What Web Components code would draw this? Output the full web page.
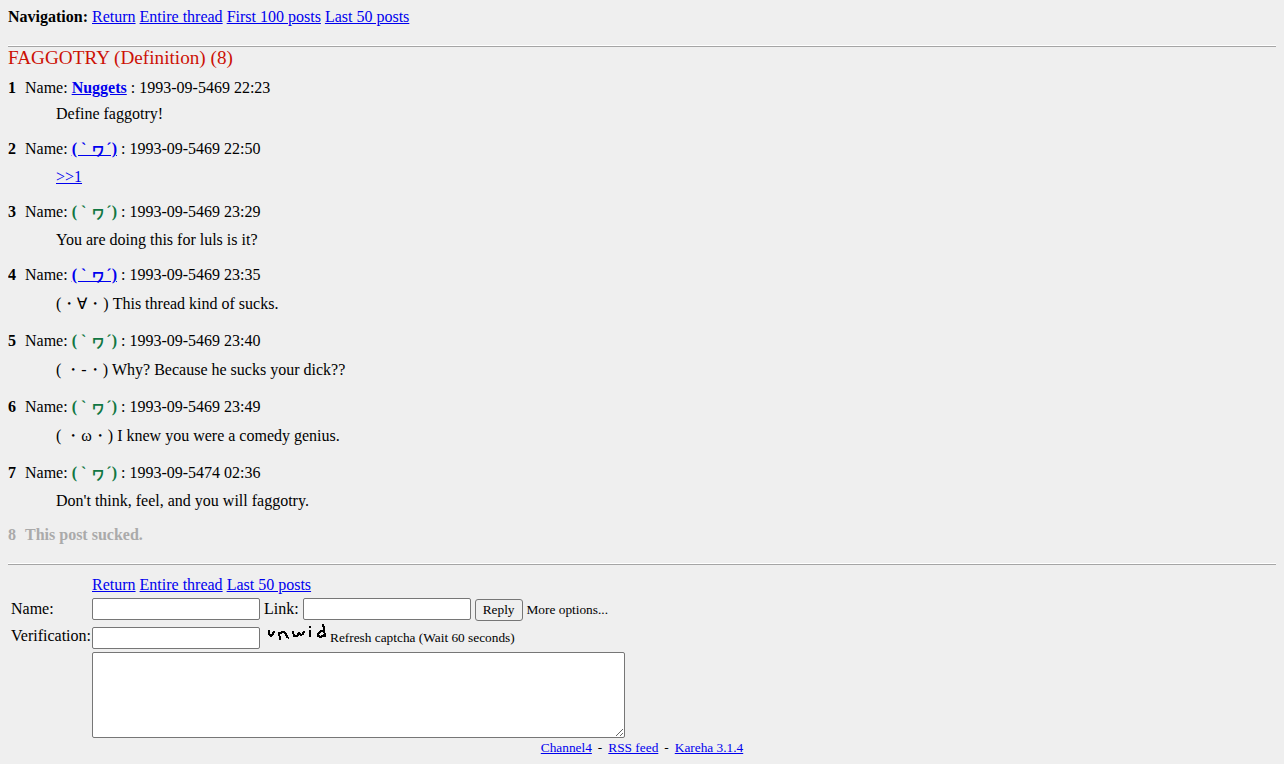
<!DOCTYPE html>
<html lang="en">
<head>
<meta charset="utf-8">
<title>Thread</title>
<style>
body { margin: 8px; background: #efefef; color: #000; font: 16px "Liberation Serif", serif; }
</style>
</head>
<body>
<board-page></board-page>
<script>
class Base extends HTMLElement {
  constructor() {
    super();
    this.attachShadow({ mode: 'open' }).innerHTML = '<style>:host{display:block}a{color:#0000ee}</style>' + this.view();
  }
}
customElements.define('thread-nav', class extends Base {
  view() { return '<slot></slot>'; }
});
customElements.define('page-rule', class extends Base {
  view() { return '<style>:host{border-top:1px solid #fff;border-bottom:1px solid #a5a5a5}</style>'; }
});
customElements.define('thread-post', class extends Base {
  view() {
    return `<style>
      article{margin-bottom:16px}
      header{display:flex;align-items:baseline;gap:9px;margin-bottom:8px}
      .body{margin-left:48px}
      .name{font-weight:bold;color:#117743}
      :host([deleted]){color:#aaa;font-weight:bold}
      :host([deleted]) .body, :host([deleted]) .meta{display:none}
      :host([deleted]) header, :host([deleted]) article{margin-bottom:0}
      </style>
      <article><header><b><slot name="number"></slot></b><div><span class="meta">Name: <span class="name"><slot name="name"></slot></span> : </span><slot name="date"></slot></div></header>
      <div class="body"><slot></slot></div></article>`;
  }
});
customElements.define('captcha-image', class extends Base {
  view() {
    return `<style>:host{display:inline-block}svg{display:block}</style>
      <svg width="62" height="20" viewBox="0 -1 62 20" fill="none" stroke="#000" stroke-width="2" shape-rendering="crispEdges" role="img" aria-label="captcha">
      <path d="M5 7L5 11L7 13L9 11L10 8M15 9L16 17M15 10L20 9L22 11L23 14L25 15M29 8L30 13L33 13L35 10L37 12L39 11L40 8M46 3V5M46 7V14M59 1L60 6L61 14M60 8L57 8L54 11L54 13L57 14L60 12"/></svg>`;
  }
});
customElements.define('reply-form', class extends Base {
  view() {
    return `<style>
      input{box-sizing:border-box;width:168px;height:22px;margin:0;padding:1px 2px;border:1px solid #767676;border-radius:2px;background:#fff;font:13px "Liberation Sans",sans-serif}
      button{box-sizing:border-box;height:22px;margin:0;padding:1px 7px;border:1px solid #767676;border-radius:3px;background:#efefef;color:#000;font:inherit;font-size:smaller}
      textarea{grid-column:2;display:block;box-sizing:border-box;width:533px;max-width:100%;height:86px;margin:0;border:1px solid #767676;border-radius:2px;background:#fff;font:13px "Liberation Mono",monospace}
      small{font-size:smaller}
      form{margin:0}
      .grid{display:grid;grid-template-columns:77px 1fr;column-gap:4px;padding:0 3px;align-items:center}
      .links{grid-column:2;height:22px}
      .row{display:flex;align-items:baseline;gap:4px;height:24px}
      .check{height:30px}
      .grid>label{padding-bottom:2px;white-space:nowrap}
      </style>
      <form><div class="grid">
      <div class="links"><a href="#">Return</a> <a href="#">Entire thread</a> <a href="#">Last 50 posts</a></div>
      <label for="n">Name:</label>
      <div class="row"><input id="n"><label for="l">Link:</label><input id="l"><button type="button">Reply</button><small>More options...</small></div>
      <label for="v">Verification:</label>
      <div class="row check"><input id="v"><captcha-image></captcha-image><small>Refresh captcha (Wait 60 seconds)</small></div>
      <textarea aria-label="Comment"></textarea>
      </div></form>`;
  }
});
customElements.define('page-footer', class extends Base {
  view() {
    return `<style>footer{display:flex;justify-content:center;gap:6px;font-size:smaller;line-height:15px;padding-top:2px}</style>
      <footer><a href="#">Channel4</a><span>-</span><a href="#">RSS feed</a><span>-</span><a href="#">Kareha 3.1.4</a></footer>`;
  }
});
customElements.define('board-page', class extends Base {
  view() {
    const kao = '( ` ヮ´)';
    const posts = [
      ['<a href="#">Nuggets</a>', '1993-09-5469 22:23', 'Define faggotry!'],
      [`<a href="#">${kao}</a>`, '1993-09-5469 22:50', '<a href="#">&gt;&gt;1</a>'],
      [kao, '1993-09-5469 23:29', 'You are doing this for luls is it?'],
      [`<a href="#">${kao}</a>`, '1993-09-5469 23:35', '(・∀・) This thread kind of sucks.'],
      [kao, '1993-09-5469 23:40', '( ・-・) Why? Because he sucks your dick??'],
      [kao, '1993-09-5469 23:49', '( ・ω・) I knew you were a comedy genius.'],
      [kao, '1993-09-5474 02:36', "Don't think, feel, and you will faggotry."]
    ];
    return `<style>
      thread-nav{margin-bottom:19px}
      h1{margin:0 0 10px;font-size:larger;line-height:22px;font-weight:normal;color:#cc1105}
      .end{margin:19px 0 11px}
      </style>
      <thread-nav><b>Navigation:</b> <a href="#">Return</a> <a href="#">Entire thread</a> <a href="#">First 100 posts</a> <a href="#">Last 50 posts</a></thread-nav>
      <page-rule></page-rule>
      <h1>FAGGOTRY (Definition) (8)</h1>
      ${posts.map((p, i) => `<thread-post><span slot="number">${i + 1}</span><span slot="name">${p[0]}</span><span slot="date">${p[1]}</span>${p[2]}</thread-post>`).join('')}
      <thread-post deleted><span slot="number">8</span><span slot="date">This post sucked.</span></thread-post>
      <page-rule class="end"></page-rule>
      <reply-form></reply-form>
      <page-footer></page-footer>`;
  }
});
</script>
</body>
</html>
